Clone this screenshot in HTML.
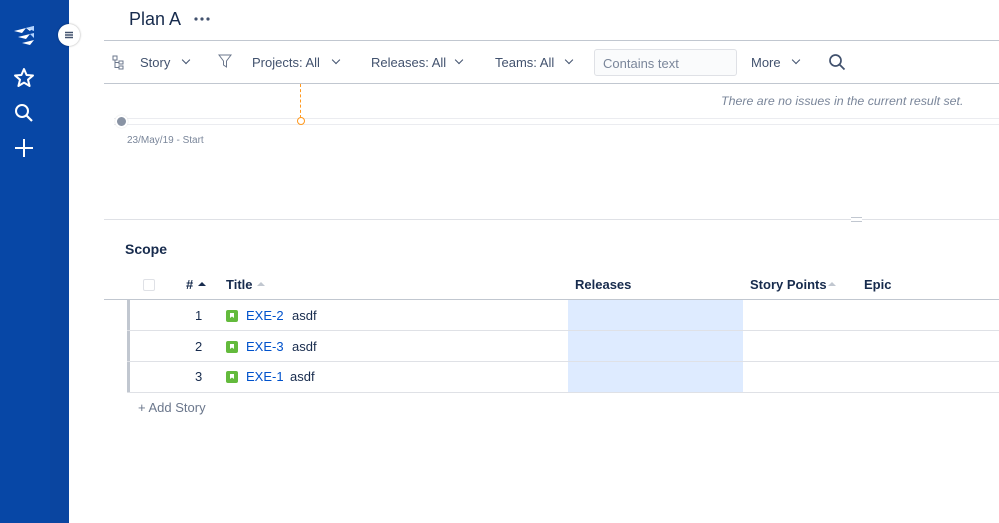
<!DOCTYPE html><html><head><style>
*{margin:0;padding:0;box-sizing:border-box}
body{width:999px;height:523px;overflow:hidden;background:#fff;font-family:"Liberation Sans",sans-serif;color:#172B4D;position:relative}
.a{position:absolute;white-space:nowrap}
.side{left:0;top:0;width:69px;height:523px;background:#0747A6}
.side2{left:50px;top:0;width:19px;height:523px;background:#0a45a0}
.f{font-size:13px;color:#42526E}
.ch{display:inline-block;width:6px;height:6px;border-right:1.6px solid #42526E;border-bottom:1.6px solid #42526E;transform:rotate(45deg);position:absolute}
.hl{height:1px;background:#DFE1E6}
.row{font-size:13px}
.ic{width:12px;height:12px;background:#63BA3C;border-radius:2px}
.ic:after{content:"";position:absolute;left:4px;top:3px;width:4px;height:5px;background:#fff;clip-path:polygon(0 0,100% 0,100% 100%,50% 70%,0 100%)}
.lk{color:#0052CC}
</style></head><body>
<div class="a side"></div><div class="a side2"></div>
<svg class="a" style="left:12px;top:25px" width="24" height="22" viewBox="0 0 24 22"><path d="M2 6 L14 3 L10 8Z M6 12 L18 9 L14 14Z M10 18 L22 15 L18 20Z M14 3 L22 1 L18 6Z" fill="#fff"/><path d="M14 3 L22 1 L22 6Z M18 9 L22 8 L22 13Z" fill="#B3D4FF"/></svg>
<svg class="a" style="left:13px;top:67px" width="22" height="21" viewBox="0 0 22 21"><path d="M11 2 L13.6 8 L20 8.5 L15 12.7 L16.6 19 L11 15.6 L5.4 19 L7 12.7 L2 8.5 L8.4 8Z" fill="none" stroke="#fff" stroke-width="2" stroke-linejoin="round"/></svg>
<svg class="a" style="left:14px;top:103px" width="20" height="20"><circle cx="8" cy="8" r="6" fill="none" stroke="#fff" stroke-width="2"/><path d="M12.5 12.5 L18 18" stroke="#fff" stroke-width="2.2"/></svg>
<svg class="a" style="left:14px;top:138px" width="20" height="20"><path d="M10 1V19M1 10H19" stroke="#fff" stroke-width="2"/></svg>
<div class="a" style="left:58px;top:24px;width:22px;height:22px;border-radius:50%;background:#fff;box-shadow:0 0 2px rgba(0,0,0,.35)"></div>
<svg class="a" style="left:63px;top:29px" width="12" height="12"><path d="M2 3.5H10M2 6H10M2 8.5H10" stroke="#42526E" stroke-width="1.4"/></svg>
<div class="a" style="left:129px;top:9px;font-size:18px">Plan A</div>
<svg class="a" style="left:193px;top:16px" width="18" height="6"><circle cx="3" cy="3" r="1.6" fill="#42526E"/><circle cx="9" cy="3" r="1.6" fill="#42526E"/><circle cx="15" cy="3" r="1.6" fill="#42526E"/></svg>
<div class="a hl" style="left:104px;top:40px;width:895px;background:#C1C7D0"></div>
<svg class="a" style="left:112px;top:55px" width="12" height="15"><path d="M1 1h4v4h-4zM7 6h4v3h-4zM7 11h4v3h-4zM3 5v7.5h4M3 7.5h4" fill="none" stroke="#6B778C" stroke-width="1"/></svg>
<div class="a f" style="left:140px;top:55px">Story</div><span class="ch" style="left:183px;top:57px"></span>
<svg class="a" style="left:218px;top:54px" width="14" height="15"><path d="M1 1H13L8.5 7V13L5.5 11V7Z" fill="none" stroke="#6B778C" stroke-width="1"/></svg>
<div class="a f" style="left:252px;top:55px">Projects: All</div><span class="ch" style="left:333px;top:57px"></span>
<div class="a f" style="left:371px;top:55px">Releases: All</div><span class="ch" style="left:456px;top:57px"></span>
<div class="a f" style="left:495px;top:55px">Teams: All</div><span class="ch" style="left:566px;top:57px"></span>
<div class="a" style="left:594px;top:49px;width:143px;height:27px;border:1px solid #DFE1E6;border-radius:3px;background:#FAFBFC;font-size:13px;color:#7A869A;padding:6px 8px">Contains text</div>
<div class="a f" style="left:751px;top:55px">More</div><span class="ch" style="left:793px;top:57px"></span>
<svg class="a" style="left:828px;top:53px" width="18" height="18"><circle cx="7.5" cy="7.5" r="5.5" fill="none" stroke="#42526E" stroke-width="1.7"/><path d="M11.5 11.5L16.5 16.5" stroke="#42526E" stroke-width="1.8"/></svg>
<div class="a hl" style="left:104px;top:83px;width:895px;background:#C1C7D0"></div>
<div class="a" style="left:721px;top:94px;font-size:12.4px;font-style:italic;color:#7A869A">There are no issues in the current result set.</div>
<div class="a" style="left:300px;top:84px;height:34px;border-left:1.5px dashed #FF991F"></div>
<div class="a hl" style="left:114px;top:118px;width:885px;background:#EBECF0"></div>
<div class="a hl" style="left:114px;top:124px;width:885px;background:#EBECF0"></div>
<div class="a" style="left:115px;top:115px;width:13px;height:13px;border-radius:50%;background:#8993A4;border:2px solid #fff;box-shadow:0 0 1px #ccc"></div>
<div class="a" style="left:297px;top:117px;width:8px;height:8px;border-radius:50%;background:#fff;border:1.5px solid #FF991F"></div>
<div class="a" style="left:127px;top:135px;font-size:10px;color:#7A869A">23/May/19 - Start</div>
<div class="a hl" style="left:104px;top:219px;width:895px"></div>
<div class="a" style="left:851px;top:217px;width:11px;height:5px;border-top:1px solid #C1C7D0;border-bottom:1px solid #C1C7D0;background:#fff"></div>
<div class="a" style="left:125px;top:241px;font-size:14px;font-weight:bold">Scope</div>
<div class="a" style="left:143px;top:279px;width:12px;height:12px;border:1.5px solid #DFE1E6;border-radius:2px"></div>
<div class="a" style="left:186px;top:277px;font-size:13px;font-weight:bold">#</div>
<div class="a" style="left:198px;top:282px;border:4px solid transparent;border-bottom:4px solid #172B4D;border-top:0"></div>
<div class="a" style="left:226px;top:277px;font-size:13px;font-weight:bold">Title</div>
<div class="a" style="left:257px;top:282px;border:4px solid transparent;border-bottom:4px solid #C1C7D0;border-top:0"></div>
<div class="a" style="left:575px;top:277px;font-size:13px;font-weight:bold">Releases</div>
<div class="a" style="left:750px;top:277px;font-size:13px;font-weight:bold">Story Points</div>
<div class="a" style="left:828px;top:282px;border:4px solid transparent;border-bottom:4px solid #C1C7D0;border-top:0"></div>
<div class="a" style="left:864px;top:277px;font-size:13px;font-weight:bold">Epic</div>
<div class="a hl" style="left:104px;top:299px;width:895px;background:#C1C7D0"></div>
<div class="a" style="left:568px;top:300px;width:175px;height:92px;background:#DEEBFF"></div>
<div class="a" style="left:127px;top:300px;width:3px;height:92px;background:#C1C7D0"></div>
<div class="a hl" style="left:127px;top:330px;width:872px"></div>
<div class="a hl" style="left:127px;top:361px;width:872px"></div>
<div class="a hl" style="left:127px;top:392px;width:872px"></div>
<div class="a row" style="left:195px;top:308px">1</div><div class="a ic" style="left:226px;top:310px"></div><div class="a row lk" style="left:246px;top:308px">EXE-2</div><div class="a row" style="left:292px;top:308px">asdf</div>
<div class="a row" style="left:195px;top:339px">2</div><div class="a ic" style="left:226px;top:341px"></div><div class="a row lk" style="left:246px;top:339px">EXE-3</div><div class="a row" style="left:292px;top:339px">asdf</div>
<div class="a row" style="left:195px;top:369px">3</div><div class="a ic" style="left:226px;top:371px"></div><div class="a row lk" style="left:246px;top:369px">EXE-1</div><div class="a row" style="left:290px;top:369px">asdf</div>
<div class="a" style="left:138px;top:400px;font-size:13px;color:#6B778C">+ Add Story</div>
</body></html>
